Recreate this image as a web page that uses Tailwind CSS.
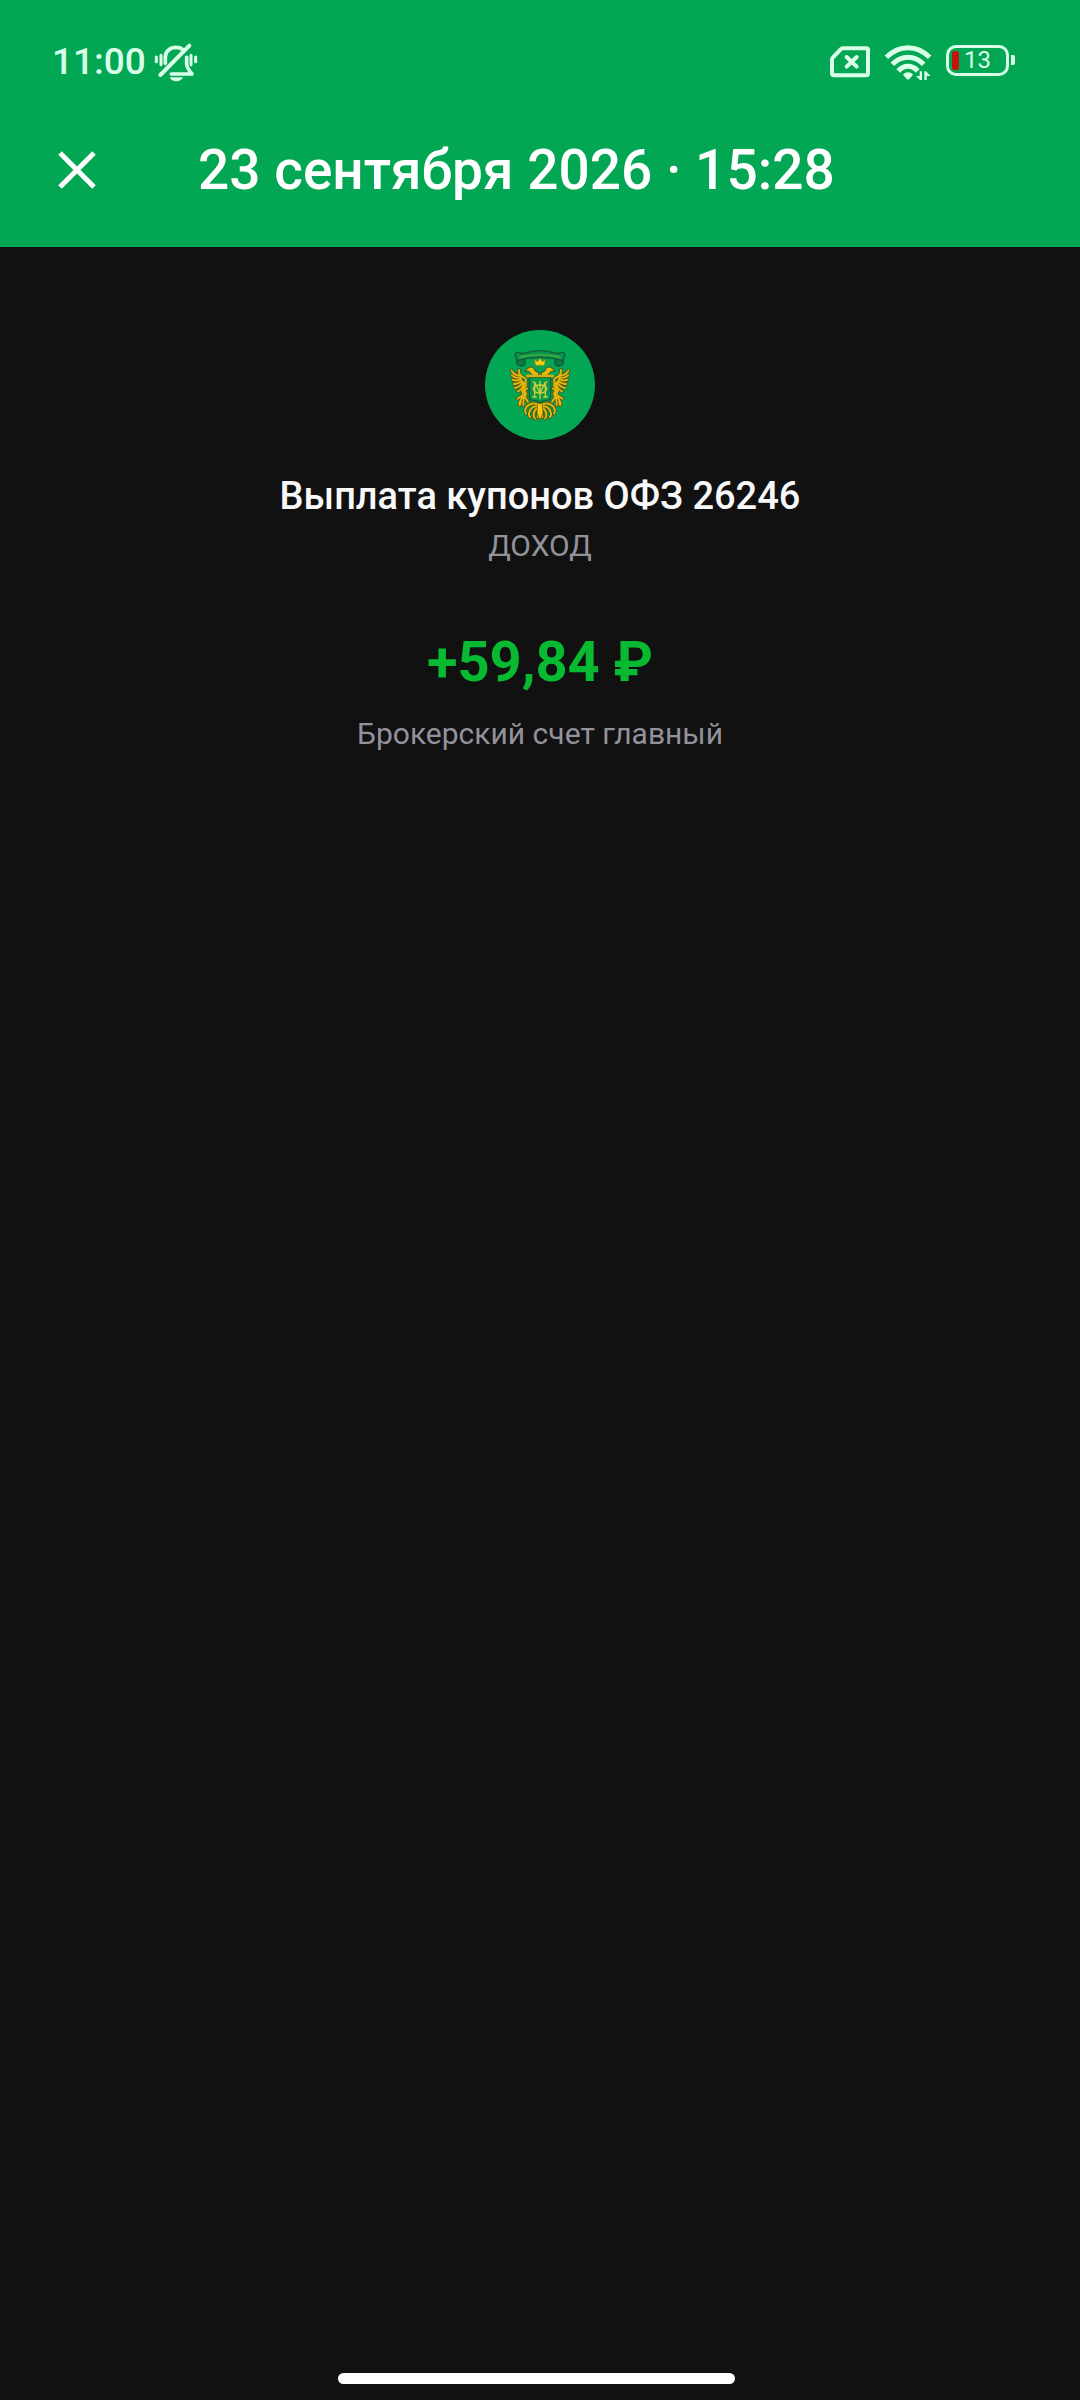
<!DOCTYPE html>
<html lang="ru">
<head>
<meta charset="utf-8">
<meta name="viewport" content="width=device-width, initial-scale=1">
<title>Выплата купонов ОФЗ 26246</title>
<script src="https://cdn.jsdelivr.net/npm/@tailwindcss/browser@4"></script>
</head>
<body class="flex min-h-screen flex-col bg-[#111111] font-['Roboto',sans-serif] text-white">
  <header class="bg-[#03a753]">
    <div class="flex items-center justify-between pt-8 pr-[65px] pl-13 text-[#d9ffe9]">
      <div class="flex items-center gap-2">
        <span class="text-[37px] leading-[60px] font-medium">11:00</span>
        <!-- muted bell -->
        <svg class="h-10 w-11" viewBox="0 0 132 120" fill="none" stroke="currentColor" stroke-width="11" stroke-linecap="round" stroke-linejoin="round" aria-hidden="true">
          <path d="M34 64V46c0-18 14-30 32-30 8 0 15 2 20 6M98 46v20c0 10 4 16 16 30H52"/>
          <path d="M106 11 19 99" stroke-width="12"/>
          <path d="M7 45v14M21 40v28M111 40v28M125 45v14" stroke-width="9"/>
          <path d="M47 106h40c-4 8-11 12-20 12s-16-4-20-12z" fill="currentColor" stroke="none"/>
        </svg>
      </div>
      <div class="flex items-center gap-[14px]">
        <svg class="h-8 w-10" viewBox="0 0 120 96" fill="none" stroke="currentColor" stroke-width="12" stroke-linejoin="round" stroke-linecap="round" aria-hidden="true">
          <path d="M38 7h71q5 0 5 5v70q0 6-5 6H12q-6 0-6-6V40q0-3 3-6L32 10q3-3 6-3z"/>
          <path d="m50 33 30 29M80 33 50 62"/>
        </svg>
        <svg class="h-9 w-12" viewBox="0 0 144 108" fill="none" stroke="currentColor" stroke-width="15" aria-hidden="true">
          <path d="M7 40Q36 11 72 11t65 29M25 61q21-21 47-21t47 21M43 81q12-14 29-14t29 14"/>
          <path d="M72 85c-7 0-12 3-15 7l11 13q4 3 8 0l11-13c-3-4-8-7-15-7z" fill="currentColor" stroke="none"/>
          <path d="M107 82h7v27h-5l-13-13h11zM121 109h7V96h12l-14-14h-5z" fill="currentColor" stroke="none"/>
        </svg>
        <div class="flex items-center gap-[2px] pb-1">
          <div class="flex h-[31px] w-[63px] items-center rounded-[10px] border-3 border-current pl-[3px]">
            <span class="h-[19px] w-[7px] rounded-[2px] bg-[#c41410]"></span>
            <span class="pl-[5px] text-[24px] leading-[25px]">13</span>
          </div>
          <span class="h-[10px] w-1 rounded-r-[2px] bg-[#d9ffe9]"></span>
        </div>
      </div>
    </div>
    <div class="flex h-[155px] items-center gap-[84px] pl-[40px]">
      <button type="button" aria-label="Закрыть" class="flex h-[74px] w-[74px] items-center justify-center">
        <svg class="h-10 w-10" viewBox="0 0 40 40" fill="none" stroke="currentColor" stroke-width="5" aria-hidden="true"><path d="m3 3 34 34M37 3 3 37"/></svg>
      </button>
      <h1 class="text-[55px] leading-[72px] font-medium">23 сентября 2026 · 15:28</h1>
    </div>
  </header>

  <main class="flex flex-1 flex-col items-center px-8 pt-[83px] text-center">
    <!-- issuer emblem: double-headed eagle with ribbon and shield -->
    <svg class="h-[110px] w-[110px]" viewBox="30 30 330 330" fill="none" stroke-linecap="round" stroke-linejoin="round" aria-hidden="true">
      <defs>
        <path id="feathers" d="M132 150q-2 16 16 24M134 166q-16 0-24-14M136 172q-16 4-25-6M138 177q-14 8-25 2M140 182q-12 12-24 10M143 186q-8 16-23 18M147 188q-4 20-18 26M151 188q0 14-10 26M152 176v24"/>
        <path id="leg" d="M156 206q-12 6-14 22M150 212q2 12-4 20M154 220l-6 12M140 228l-12 8M141 232l-8 18M146 234l-1 22M150 232l9 14M138 246l-4 10"/>
        <path id="tail" d="M187 252q-20-6-32 8-8 12-2 20M186 258q-18 2-23 18-3 10 2 15M188 264q-11 6-12 20 0 8 4 12M191 258l-3 34"/>
        <g id="wing">
          <g stroke="#4b4c14" stroke-width="10">
            <use href="#feathers"/><use href="#leg"/><use href="#tail"/>
          </g>
          <g stroke="#e3b40c" stroke-width="6">
            <use href="#feathers"/><use href="#leg"/><use href="#tail"/>
          </g>
          <path d="M190 168q-14 3-22-7-5-10-18-7l8-9q12-9 19 1 3 12 13 10z" fill="#e8b80c" stroke="#4b4c14" stroke-width="3"/>
        </g>
      </defs>
      <circle cx="195" cy="195" r="165" fill="#03a753"/>
      <path d="M126 118q-6 18 14 20 12-2 10-18M264 118q6 18-14 20-12-2-10-18" fill="#0a7a44" stroke="#155b35" stroke-width="4"/>
      <path d="M120 104q4-10 14-6 10 4 22 0 39-12 78 0 12 4 22 0 10-4 14 6l-6 18q-69-20-138 0z" fill="#079650" stroke="#155b35" stroke-width="4"/>
      <path d="M134 112q61-15 122 0" stroke="#8cb82b" stroke-width="4" stroke-linecap="butt" stroke-dasharray="3 2"/>
      <use href="#wing"/>
      <use href="#wing" transform="matrix(-1 0 0 1 390 0)"/>
      <path d="M189 248h12l3 30-9 24-9-24z" fill="#f4c60c" stroke="#4b4c14" stroke-width="2"/>
      <path d="m179 119 9 6 7-11 7 11 9-6-3 17h-26z" fill="#f8d012" stroke="#a47a0c" stroke-width="2"/>
      <path d="M163 172h64v58q0 10-10 11-17 1-22 9-5-8-22-9-10-1-10-11z" fill="#079a4b" stroke="#155b35" stroke-width="4"/>
      <path d="M156 168h78" stroke="#d9ad10" stroke-width="7"/>
      <g stroke="#cfce38" stroke-width="4">
        <path d="m174 186 6 2 15 32 15-32 6-2M179 188v40M211 188v40M173 231h11M206 231h11M195 184v52"/>
        <ellipse cx="195" cy="207" rx="20" ry="12"/>
      </g>
    </svg>
    <h2 class="mt-8 text-[38px] leading-12 font-medium text-[#f8f8f8]">Выплата купонов ОФЗ 26246</h2>
    <p class="mt-[6px] text-[30px] leading-10 text-[#92929b]">ДОХОД</p>
    <p class="mt-16 text-[56px] leading-16 font-bold text-[#08ba31]">+59,84 ₽</p>
    <p class="mt-5 text-[30px] leading-10 text-[#92929b]">Брокерский счет главный</p>
  </main>

  <footer class="flex justify-center pr-[7px] pb-4">
    <div class="h-[11px] w-[37%] rounded-full bg-white"></div>
  </footer>
</body>
</html>
